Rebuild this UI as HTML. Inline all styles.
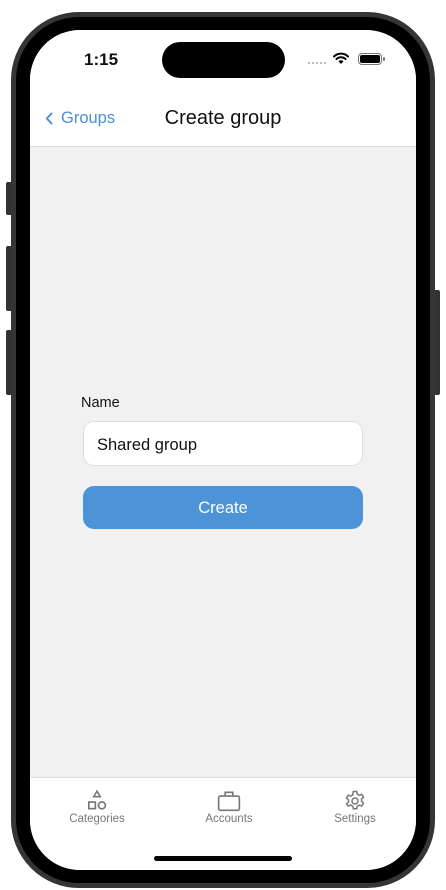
<!DOCTYPE html>
<html><head><meta charset="utf-8"><style>
*{margin:0;padding:0;box-sizing:border-box}
body{width:446px;height:890px;background:#fff;position:relative;overflow:hidden;font-family:"Liberation Sans",sans-serif}
.btn{position:absolute;background:#333;border-radius:2px}
.frame{position:absolute;left:11px;top:12px;width:424px;height:876px;border-radius:68px;background:#000;border:5px solid #353535}
.screen{position:absolute;left:30px;top:30px;width:386px;height:840px;border-radius:50px;background:#f1f1f1;overflow:hidden}
.top{position:absolute;left:0;top:0;width:386px;height:117px;background:#fff;border-bottom:1px solid #ddd}
.island{position:absolute;left:132px;top:12px;width:123px;height:36px;border-radius:18px;background:#000}
.time{position:absolute;left:54px;top:20px;font-size:17px;font-weight:bold;color:#111}
.back{position:absolute;left:31px;top:79px;font-size:16.5px;color:#4a90d9}
.title{position:absolute;left:0;width:386px;text-align:center;top:77px;font-size:20px;color:#111}
.label{position:absolute;left:51px;top:365px;font-size:14.5px;color:#111}
.input{position:absolute;left:53px;top:391px;width:280px;height:45px;background:#fff;border:1px solid #ddd;border-radius:11px;font-size:16.5px;padding:14px 0 0 13px;color:#111}
.create{position:absolute;left:53px;top:456px;width:280px;height:43px;background:#4d93d8;border-radius:11px;color:#fff;font-size:16.5px;text-align:center;line-height:44px}
.tab{position:absolute;left:0;top:747px;width:386px;height:93px;background:#fff;border-top:1px solid #ddd}
.ti{position:absolute;top:11px;width:100px;text-align:center;color:#777;font-size:11.5px}
.ti svg{display:block;margin:0 auto 0}
.home{position:absolute;left:124px;top:826px;width:138px;height:5px;border-radius:3px;background:#000}
</style></head><body>
<div class="btn" style="left:6px;top:182px;width:6px;height:33px"></div>
<div class="btn" style="left:6px;top:246px;width:6px;height:65px"></div>
<div class="btn" style="left:6px;top:330px;width:6px;height:65px"></div>
<div class="btn" style="left:434px;top:290px;width:6px;height:105px"></div>
<div class="frame"></div>
<div class="screen">
 <div class="top">
  <div class="island"></div>
  <div class="time">1:15</div>
  <div style="position:absolute;left:278px;top:32px;width:18px;border-top:2px dotted #bbb"></div>
  <svg style="position:absolute;left:303px;top:22px" width="16" height="12" viewBox="0 0 16 12"><path d="M1 4.5A10 10 0 0 1 15 4.5M3.5 7A6.5 6.5 0 0 1 12.5 7" stroke="#000" stroke-width="2" fill="none" stroke-linecap="round"/><path d="M5.5 9.3L8 12L10.5 9.3A3.5 3.5 0 0 0 5.5 9.3Z" fill="#000"/></svg>
  <div style="position:absolute;left:328px;top:23px;width:24px;height:12px;border:1.5px solid #777;border-radius:4px;padding:1px"><div style="width:100%;height:100%;background:#000;border-radius:2px"></div></div>
  <div style="position:absolute;left:353px;top:27px;width:2px;height:4px;background:#777;border-radius:1px"></div>
  <svg style="position:absolute;left:15px;top:82px" width="8" height="13" viewBox="0 0 8 13"><path d="M6.5 1.5L1.8 6.5L6.5 11.5" stroke="#4a90d9" stroke-width="2" fill="none" stroke-linecap="round" stroke-linejoin="round"/></svg>
  <div class="back">Groups</div>
  <div class="title">Create group</div>
 </div>
 <div class="label">Name</div>
 <div class="input">Shared group</div>
 <div class="create">Create</div>
 <div class="tab">
  <div class="ti" style="left:17px"><svg width="24" height="24" viewBox="0 0 22 22" fill="none" stroke="#777" stroke-width="1.5"><path d="M11 2L14 7H8Z"/><rect x="3.5" y="12" width="6" height="6"/><circle cx="15.5" cy="15" r="3.2"/></svg>Categories</div>
  <div class="ti" style="left:149px"><svg width="24" height="24" viewBox="0 0 22 22" fill="none" stroke="#777" stroke-width="1.5"><rect x="1.5" y="6.5" width="19" height="13" rx="1.5"/><path d="M7.5 6.5V3H14.5V6.5"/></svg>Accounts</div>
  <div class="ti" style="left:275px"><svg width="24" height="24" viewBox="0 0 24 24" fill="none" stroke="#777" stroke-width="1.5"><path d="M10.3 2.5h3.4l.6 2.6 2 1.1 2.5-.9 1.7 2.9-2 1.8v2.3l2 1.8-1.7 2.9-2.5-.9-2 1.1-.6 2.6h-3.4l-.6-2.6-2-1.1-2.5.9L3.5 15l2-1.8v-2.3l-2-1.8 1.7-2.9 2.5.9 2-1.1z"/><circle cx="12" cy="12" r="3"/></svg>Settings</div>
 </div>
 <div class="home"></div>
</div>
</body></html>
